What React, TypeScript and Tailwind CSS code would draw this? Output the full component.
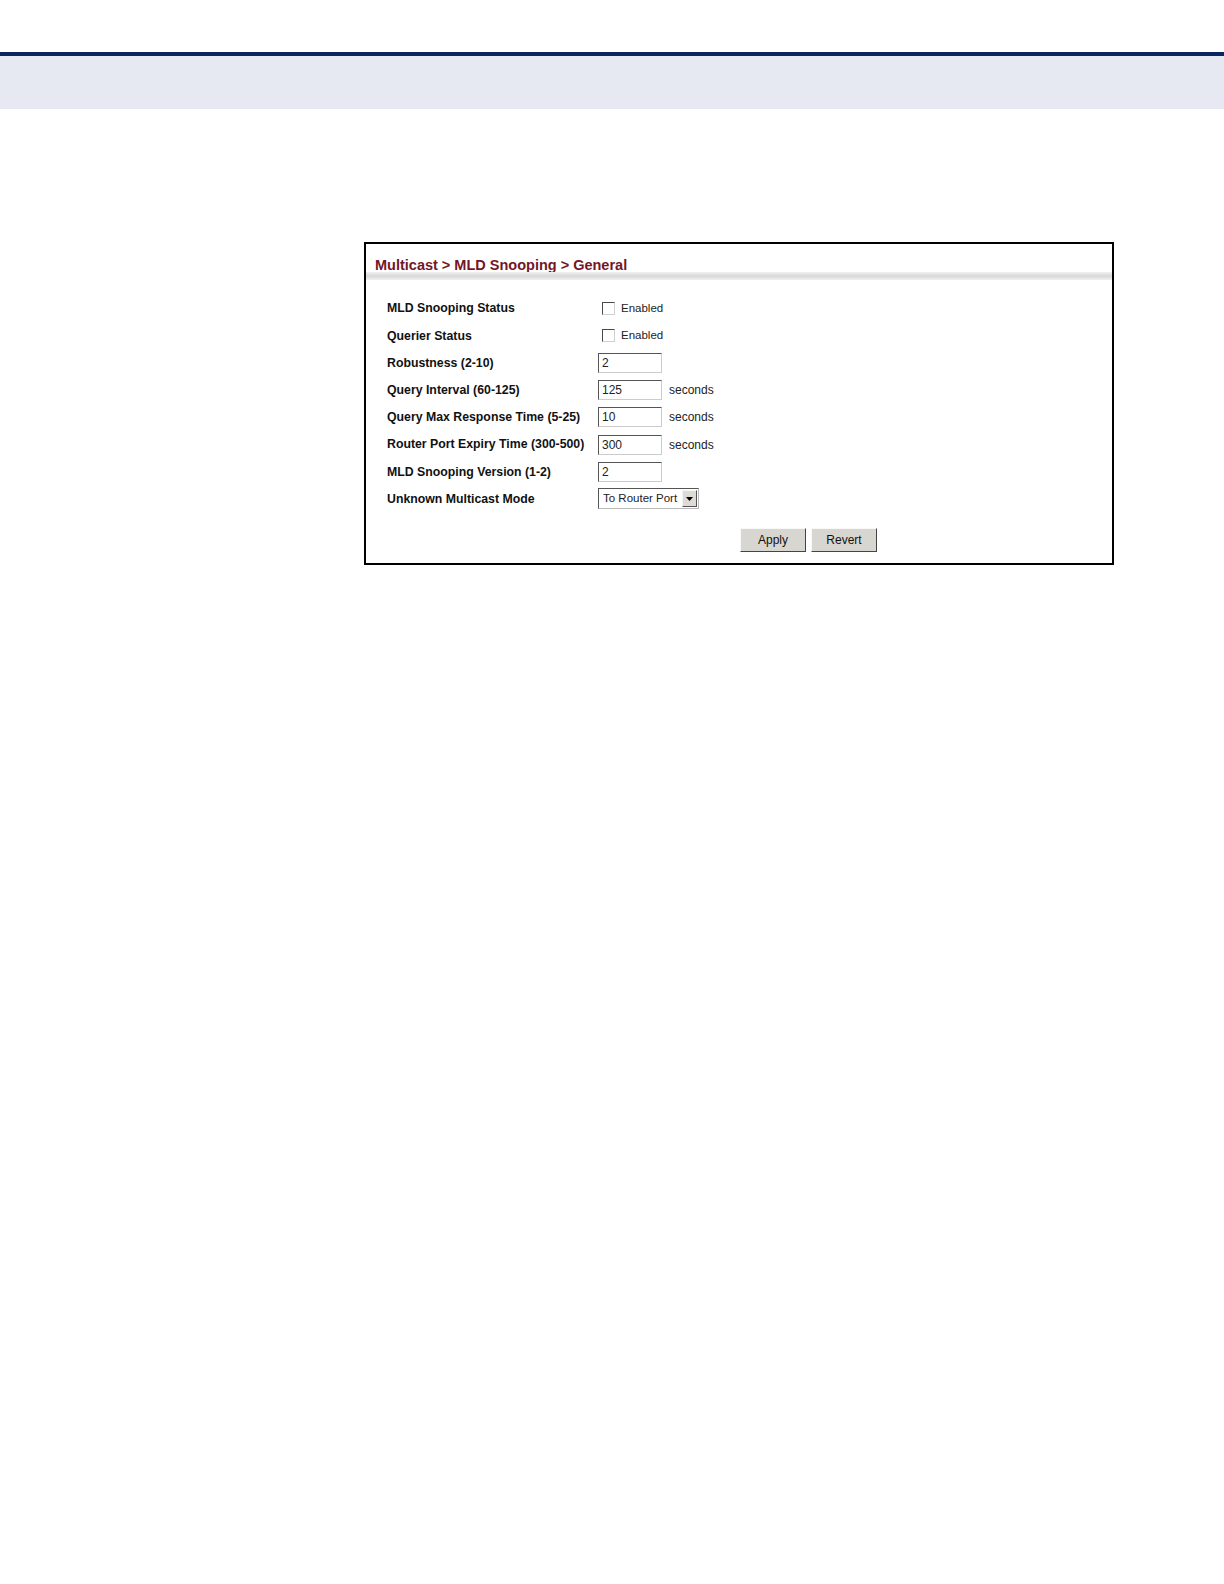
import React from 'react';

type Row = {
  label: string;
  kind: 'check' | 'text' | 'select';
  value?: string;
  unit?: string;
};

const ROWS: Row[] = [
  { label: 'MLD Snooping Status', kind: 'check' },
  { label: 'Querier Status', kind: 'check' },
  { label: 'Robustness (2-10)', kind: 'text', value: '2' },
  { label: 'Query Interval (60-125)', kind: 'text', value: '125', unit: 'seconds' },
  { label: 'Query Max Response Time (5-25)', kind: 'text', value: '10', unit: 'seconds' },
  { label: 'Router Port Expiry Time (300-500)', kind: 'text', value: '300', unit: 'seconds' },
  { label: 'MLD Snooping Version (1-2)', kind: 'text', value: '2' },
  { label: 'Unknown Multicast Mode', kind: 'select', value: 'To Router Port' },
];

const Field: React.FC<{ row: Row }> = ({ row }) => {
  if (row.kind === 'check') {
    return (
      <div className="flex items-center">
        <span className="ml-[4px] w-[13px] h-[13px] border border-t-[#4a4a4a] border-l-[#4a4a4a] border-b-[#d0d0d0] border-r-[#d0d0d0] bg-white" />
        <span className="ml-[6px] text-[11.5px] text-[#222]">Enabled</span>
      </div>
    );
  }
  if (row.kind === 'select') {
    return (
      <div className="flex items-center h-[21px] w-[101px] border border-t-[#555] border-l-[#555] border-b-[#bbb] border-r-[#bbb] bg-white">
        <span className="flex-1 pl-[4px] text-[11.5px] text-[#222] leading-none whitespace-nowrap">{row.value}</span>
        <span className="mr-[1px] w-[15px] h-[17px] bg-[#dedbd5] border border-t-[#f6f6f6] border-l-[#f6f6f6] border-b-[#555] border-r-[#555] flex items-center justify-center">
          <svg width="7" height="4" viewBox="0 0 7 4">
            <path d="M0 0h7L3.5 4z" fill="#000" />
          </svg>
        </span>
      </div>
    );
  }
  return (
    <div className="flex items-center">
      <div className="h-[20px] w-[64px] border border-t-[#555] border-l-[#555] border-b-[#ccc] border-r-[#ccc] bg-white pl-[3px] flex items-center text-[12px] text-[#222] leading-none">
        {row.value}
      </div>
      {row.unit && <span className="ml-[7px] text-[12px] text-[#222]">{row.unit}</span>}
    </div>
  );
};

export default function App() {
  return (
    <div className="w-[1224px] min-h-[1584px] bg-white" style={{ fontFamily: '"Liberation Sans", Arial, sans-serif' }}>
      <div className="h-[52px]" />
      <div className="h-[4px] bg-[#0b2463]" />
      <div className="h-[53px] bg-[#e6e9f1]" />

      <div className="pt-[133px] pl-[364px]">
        <div className="w-[750px] h-[323px] border-2 border-black flex flex-col">
          <div className="pl-[9px] pt-[14px] h-[28px] text-[14.5px] font-bold text-[#741626] leading-none whitespace-nowrap">
            Multicast &gt; MLD Snooping &gt; General
          </div>
          <div className="h-[8px] bg-gradient-to-b from-[#f2f2f2] via-[#d8d8d8] to-[#f0f0f0]" />

          <div className="pl-[21px] pt-[15px] flex flex-col">
            {ROWS.map((r) => (
              <div key={r.label} className="flex items-center h-[27.2px]">
                <div className="w-[211px] text-[12.3px] font-bold text-[#111] whitespace-nowrap">{r.label}</div>
                <Field row={r} />
              </div>
            ))}
          </div>

          <div className="flex gap-[5px] pl-[374px] pt-[15px]">
            <button className="w-[66px] h-[24px] bg-[#d8d6d0] border border-t-[#f8f8f8] border-l-[#f8f8f8] border-b-[#444] border-r-[#444] text-[12px] text-[#111]">
              Apply
            </button>
            <button className="w-[66px] h-[24px] bg-[#d8d6d0] border border-t-[#f8f8f8] border-l-[#f8f8f8] border-b-[#444] border-r-[#444] text-[12px] text-[#111]">
              Revert
            </button>
          </div>
        </div>
      </div>
    </div>
  );
}
